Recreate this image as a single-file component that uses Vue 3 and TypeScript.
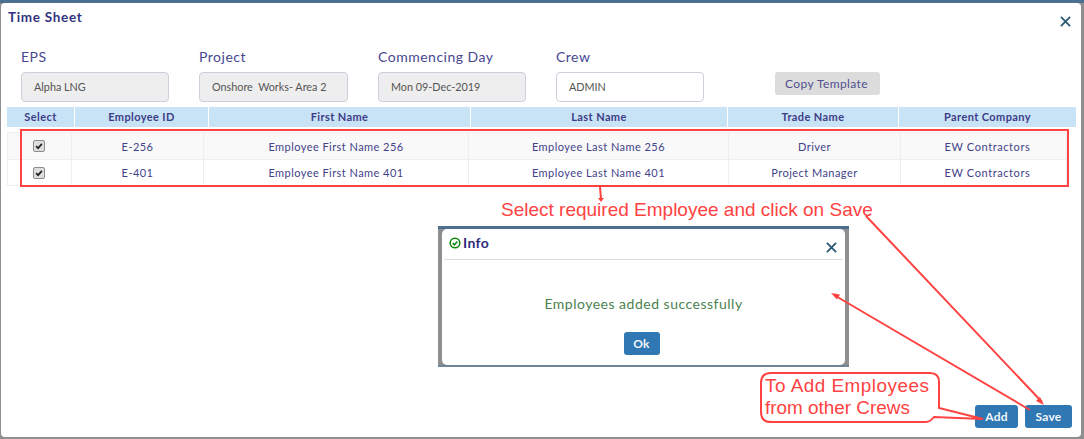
<script setup lang="ts">
interface Field {
    label: string;
    value: string;
    readonly: boolean;
}

interface Row {
    id: string;
    first: string;
    last: string;
    trade: string;
    company: string;
}

const fields: Field[] = [
    { label: 'EPS', value: 'Alpha LNG', readonly: true },
    { label: 'Project', value: 'Onshore  Works- Area 2', readonly: true },
    { label: 'Commencing Day', value: 'Mon 09-Dec-2019', readonly: true },
    { label: 'Crew', value: 'ADMIN', readonly: false }
];

const columns = ['Select', 'Employee ID', 'First Name', 'Last Name', 'Trade Name', 'Parent Company'];

const rows: Row[] = [
    { id: 'E-256', first: 'Employee First Name 256', last: 'Employee Last Name 256', trade: 'Driver', company: 'EW Contractors' },
    { id: 'E-401', first: 'Employee First Name 401', last: 'Employee Last Name 401', trade: 'Project Manager', company: 'EW Contractors' }
];
</script>

<template>
    <div class="page">
        <div class="sheet">
            <div class="sheet-header">
                <span class="sheet-title">Time Sheet</span>
                <svg class="close" viewBox="0 0 12 12"><path d="M1 1l10 10M11 1L1 11" /></svg>
            </div>

            <div class="filters">
                <div v-for="f in fields" :key="f.label" class="field">
                    <div class="field-label">{{ f.label }}</div>
                    <div class="field-input" :class="{ 'field-readonly': f.readonly }">{{ f.value }}</div>
                </div>
                <button class="copy-btn">Copy Template</button>
            </div>

            <div class="grid-head">
                <div v-for="c in columns" :key="c" class="head-cell">{{ c }}</div>
            </div>

            <div class="grid-body">
                <div v-for="r in rows" :key="r.id" class="grid-row">
                    <div class="cell">
                        <span class="check">
                            <svg viewBox="0 0 12 12"><path d="M2.5 6.2l2.4 2.4 4.6-5.2" /></svg>
                        </span>
                    </div>
                    <div class="cell">{{ r.id }}</div>
                    <div class="cell">{{ r.first }}</div>
                    <div class="cell">{{ r.last }}</div>
                    <div class="cell">{{ r.trade }}</div>
                    <div class="cell cell-company">{{ r.company }}</div>
                </div>
            </div>

            <div class="sheet-footer">
                <button class="action-btn btn-add">Add</button>
                <button class="action-btn btn-save">Save</button>
            </div>
        </div>

        <!-- 提示对话框 -->
        <div class="info-dialog">
            <div class="info-box">
                <div class="info-header">
                    <svg class="info-icon" viewBox="0 0 12 12">
                        <circle cx="6" cy="6" r="4.8" />
                        <path d="M3.7 6.1l1.7 1.7 3-3.2" />
                    </svg>
                    <span class="info-title">Info</span>
                    <svg class="close info-close" viewBox="0 0 12 12"><path d="M1 1l10 10M11 1L1 11" /></svg>
                </div>
                <div class="info-message">Employees added successfully</div>
                <div class="info-actions">
                    <button class="action-btn ok-btn">Ok</button>
                </div>
            </div>
        </div>

        <!-- 红色标注 -->
        <svg class="marks" width="1084" height="439" viewBox="0 0 1084 439">
            <rect x="21" y="130" width="1047" height="56" />
            <path d="M600 187l1 12" />
            <path class="fill" d="M598 198h6l-3 4z" />
            <path d="M866 216L1042 402" />
            <path class="fill" d="M1044 405l-8-4 4-4z" />
            <path d="M1030 410L834 295" />
            <path class="fill" d="M831 293l9 1.500-3 5z" />
            <path class="callout" d="M771 373H930q9 0 9 9V408L983 419L934 417Q930 422 926 422H771q-10 0-10-10V383q0-10 10-10z" />
        </svg>
        <div class="note note-main">Select required Employee and click on Save</div>
        <div class="note note-crews">
            <div class="note-first">To Add Employees</div>
            <div>from other Crews</div>
        </div>
    </div>
</template>

<style scoped>
.page {
    position: relative;
    width: 1084px;
    height: 439px;
    box-sizing: border-box;
    padding: 3px 3px 2px 1px;
    background: #8f8f8f;
    overflow: hidden;
    font-family: Lato, "Liberation Sans", sans-serif;
    color: #33337f;
}

.page::before {
    content: "";
    position: absolute;
    left: 0;
    top: 0;
    right: 0;
    height: 3px;
    background: #4c7190;
}

.sheet {
    position: relative;
    display: flex;
    flex-direction: column;
    height: 100%;
    box-sizing: border-box;
    background: #fff;
    border-radius: 4px;
    padding: 0 6px 9px 6px;
}

.sheet-header {
    display: flex;
    justify-content: space-between;
    align-items: flex-start;
    height: 46px;
    padding: 7px 4px 0 1px;
    box-sizing: border-box;
}

.sheet-title {
    font-size: 13.5px;
    font-weight: 700;
    letter-spacing: 0.7px;
    line-height: 15px;
}

.close {
    width: 11px;
    height: 11px;
    margin-top: 6px;
    fill: none;
    stroke: #2c5a75;
    stroke-width: 2;
}

.filters {
    display: flex;
    align-items: flex-start;
    padding-left: 14px;
    gap: 30px;
    height: 58px;
}

.field {
    width: 148px;
}

.field:nth-child(2) {
    width: 149px;
}

.field-label {
    font-size: 14px;
    line-height: 15px;
    height: 23px;
    letter-spacing: 0.5px;
    color: #474790;
    font-weight: 400;
}

.field-input {
    height: 30px;
    box-sizing: border-box;
    border: 1px solid #cfcfdb;
    border-radius: 4px;
    padding: 0 12px;
    font-size: 10.8px;
    line-height: 28px;
    color: #555;
    white-space: pre;
}

.field-readonly {
    background: #eeeeee;
}

.copy-btn {
    width: 105px;
    height: 23px;
    margin: 23px 0 0 41px;
    border: 0;
    border-radius: 3px;
    background: #dcdcdc;
    font-family: inherit;
    font-size: 12px;
    letter-spacing: 0.4px;
    color: #50508f;
    padding: 0 2px 0 0;
}

.grid-head {
    display: grid;
    grid-template-columns: 67px 133px 261px 256px 170px 177px;
    column-gap: 1px;
    width: 1069px;
    height: 20px;
}

.head-cell {
    background: #c8e2f6;
    font-size: 11px;
    font-weight: 700;
    letter-spacing: 0.4px;
    line-height: 19px;
    text-align: center;
    color: #3d3d87;
}

.grid-body {
    width: 1060px;
    margin-top: 5px;
    border: 1px solid #eeeeee;
    border-right: 0;
    box-sizing: border-box;
}

.grid-row {
    display: grid;
    grid-template-columns: 64px 132px 265px 260px 172px 1fr;
    height: 27px;
    border-bottom: 1px solid #eeeeee;
    box-sizing: border-box;
}

.grid-row:first-child {
    background: #f9f9f9;
}

.grid-row:last-child {
    height: 25px;
    border-bottom: 0;
}

.cell {
    display: flex;
    align-items: center;
    justify-content: center;
    border-right: 1px solid #eeeeee;
    font-size: 11px;
    letter-spacing: 0.45px;
    color: #42428a;
}

.cell-company {
    padding-left: 8px;
    letter-spacing: 0.6px;
}

.check {
    display: block;
    width: 12px;
    height: 12px;
    margin-right: 2px;
    box-sizing: border-box;
    border: 1px solid #8c8c8c;
    border-radius: 2px;
    background: #dedede;
}

.check svg {
    display: block;
    width: 10px;
    height: 10px;
    fill: none;
    stroke: #222;
    stroke-width: 2;
}

.sheet-footer {
    display: flex;
    justify-content: flex-end;
    align-items: flex-end;
    flex: 1;
    gap: 7px;
    padding-right: 3px;
}

.action-btn {
    height: 23px;
    border: 0;
    border-radius: 3px;
    background: #2f78b4;
    color: #f2f6fa;
    font-family: inherit;
    font-size: 12px;
    font-weight: 700;
    letter-spacing: 0.2px;
    padding: 0;
}

.btn-add {
    width: 43px;
}

.btn-save {
    width: 47px;
}

/* 提示对话框 */
.info-dialog {
    position: absolute;
    left: 438px;
    top: 226px;
    width: 411px;
    height: 141px;
    box-sizing: border-box;
    background: #8f8f8f;
    border-top: 3px solid #4c7190;
    border-bottom: 2px solid #6d8597;
    padding: 0 4px;
}

.info-box {
    height: 100%;
    box-sizing: border-box;
    background: #fff;
    border-radius: 5px;
    padding: 0 2px;
}

.info-header {
    display: flex;
    align-items: flex-start;
    height: 31px;
    box-sizing: border-box;
    border-bottom: 1px solid #dddddd;
    padding: 6px 0 0 5px;
}

.info-icon {
    width: 12px;
    height: 12px;
    margin: 2px 2px 0 0;
    fill: none;
    stroke: #0a840a;
    stroke-width: 1.500;
}

.info-title {
    font-size: 14px;
    font-weight: 700;
    letter-spacing: 0.4px;
    line-height: 16px;
    color: #2b2b7a;
}

.info-close {
    margin: 7px 6px 0 auto;
}

.info-message {
    margin-top: 36px;
    text-align: center;
    font-size: 14px;
    letter-spacing: 0.5px;
    line-height: 16px;
    color: #4b8150;
}

.info-actions {
    display: flex;
    justify-content: center;
    margin-top: 20px;
}

.ok-btn {
    width: 36px;
    margin-right: 4px;
}

/* 红色标注 */
.marks {
    position: absolute;
    left: 0;
    top: 0;
    fill: none;
    stroke: #ff4242;
    stroke-width: 2;
}

.marks .fill {
    fill: #ff4242;
    stroke: none;
}

.marks .callout {
    fill: #fff;
}

.note {
    position: absolute;
    font-family: "Liberation Sans", Arial, sans-serif;
    color: #ff4242;
    white-space: nowrap;
}

.note-main {
    left: 501px;
    top: 199px;
    line-height: 21px;
    font-size: 19px;
}

.note-crews {
    left: 765px;
    top: 375px;
    line-height: 22px;
    font-size: 18.900px;
}

.note-first {
    letter-spacing: 0.5px;
}
</style>
